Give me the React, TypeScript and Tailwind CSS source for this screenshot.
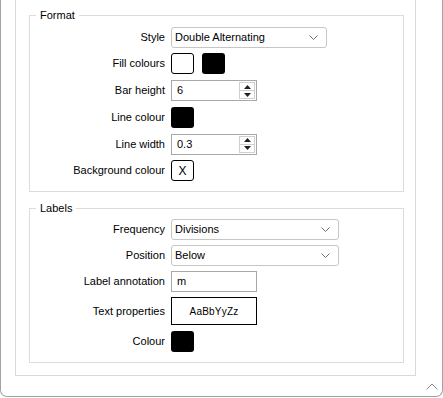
import type { ReactNode } from "react";

function Chevron() {
  return (
    <svg width="9" height="5" viewBox="0 0 9 5" className="shrink-0">
      <polyline points="0.5,0.5 4.5,4.5 8.5,0.5" fill="none" stroke="#6b6b6b" strokeWidth="1" />
    </svg>
  );
}

function Select({ value, className }: { value: string; className: string }) {
  return (
    <div
      className={
        "flex h-[21px] items-center justify-between rounded-[3px] border border-[#c6c6c6] bg-white pl-[3px] pr-[8px] " +
        className
      }
    >
      <span>{value}</span>
      <Chevron />
    </div>
  );
}

function Spinner({ value }: { value: string }) {
  return (
    <div className="flex h-[21px] w-[86px] items-stretch border border-[#a8a8a8] bg-white">
      <div className="flex flex-1 items-center pl-[5px]">{value}</div>
      <div className="my-px mr-px flex w-[16px] flex-col border border-[#cfcfcf]">
        <div className="flex flex-1 items-center justify-center border-b border-[#cfcfcf]">
          <svg width="7" height="4" viewBox="0 0 7 4">
            <polygon points="3.5,0 7,4 0,4" fill="#202020" />
          </svg>
        </div>
        <div className="flex flex-1 items-center justify-center">
          <svg width="7" height="4" viewBox="0 0 7 4">
            <polygon points="0,0 7,0 3.5,4" fill="#202020" />
          </svg>
        </div>
      </div>
    </div>
  );
}

function Swatch({ dark }: { dark?: boolean }) {
  return (
    <div
      className={
        dark
          ? "h-[21px] w-[23px] rounded-[3px] bg-black"
          : "h-[21px] w-[23px] rounded-[3px] border border-black bg-white"
      }
    />
  );
}

function Row({ label, h, children }: { label: string; h: string; children: ReactNode }) {
  return (
    <div className={"flex items-center gap-[6px] " + h}>
      <div className="w-[135px] text-right">{label}</div>
      <div className="flex items-center gap-[8px]">{children}</div>
    </div>
  );
}

function Group({ title, className, children }: { title: string; className: string; children: ReactNode }) {
  return (
    <div className={"relative border border-[#dcdcdc] " + className}>
      <span className="absolute left-[6px] top-[-8px] bg-white px-[4px] leading-[14px]">{title}</span>
      {children}
    </div>
  );
}

export default function App() {
  return (
    <div
      className="h-[398px] w-[443px] overflow-hidden bg-white text-[11px] text-black"
      style={{ fontFamily: '"Liberation Sans", Arial, sans-serif' }}
    >
      <div className="flex h-[397px] flex-col rounded-b-[7px] border-x border-b border-[#a3a3a3]">
        <div className="ml-[14px] mt-[-1px] w-[401px] border border-[#d9d9d9] pb-[12px] pl-[13px] pr-[11px] pt-[15px]">
          <Group title="Format" className="flex flex-col gap-[6px] pb-[10px] pt-[11px]">
            <Row label="Style" h="h-[20px]">
              <Select value="Double Alternating" className="w-[156px]" />
            </Row>
            <Row label="Fill colours" h="h-[21px]">
              <Swatch />
              <Swatch dark />
            </Row>
            <Row label="Bar height" h="h-[21px]">
              <Spinner value="6" />
            </Row>
            <Row label="Line colour" h="h-[21px]">
              <Swatch dark />
            </Row>
            <Row label="Line width" h="h-[20px]">
              <Spinner value="0.3" />
            </Row>
            <Row label="Background colour" h="h-[21px]">
              <div className="flex h-[21px] w-[23px] items-center justify-center rounded-[3px] border border-black text-[12px]">
                X
              </div>
            </Row>
          </Group>
          <Group title="Labels" className="mt-[16px] flex flex-col gap-[5px] pb-[10px] pt-[10px]">
            <Row label="Frequency" h="h-[21px]">
              <Select value="Divisions" className="w-[168px]" />
            </Row>
            <Row label="Position" h="h-[21px]">
              <Select value="Below" className="w-[168px]" />
            </Row>
            <Row label="Label annotation" h="h-[21px]">
              <div className="flex h-[21px] w-[86px] items-center border border-[#a8a8a8] pl-[5px]">m</div>
            </Row>
            <Row label="Text properties" h="h-[28px]">
              <div className="flex h-[28px] w-[86px] items-center justify-center border border-black text-[10px] tracking-[0.2px]">
                AaBbYyZz
              </div>
            </Row>
            <Row label="Colour" h="mt-[1px] h-[21px]">
              <Swatch dark />
            </Row>
          </Group>
        </div>
        <div className="mt-[7px] flex justify-end pr-[4px]">
          <svg width="12" height="7" viewBox="0 0 12 7">
            <polyline points="0.5,6.5 6,1 11.5,6.5" fill="none" stroke="#8a8a8a" strokeWidth="1" />
          </svg>
        </div>
      </div>
    </div>
  );
}
